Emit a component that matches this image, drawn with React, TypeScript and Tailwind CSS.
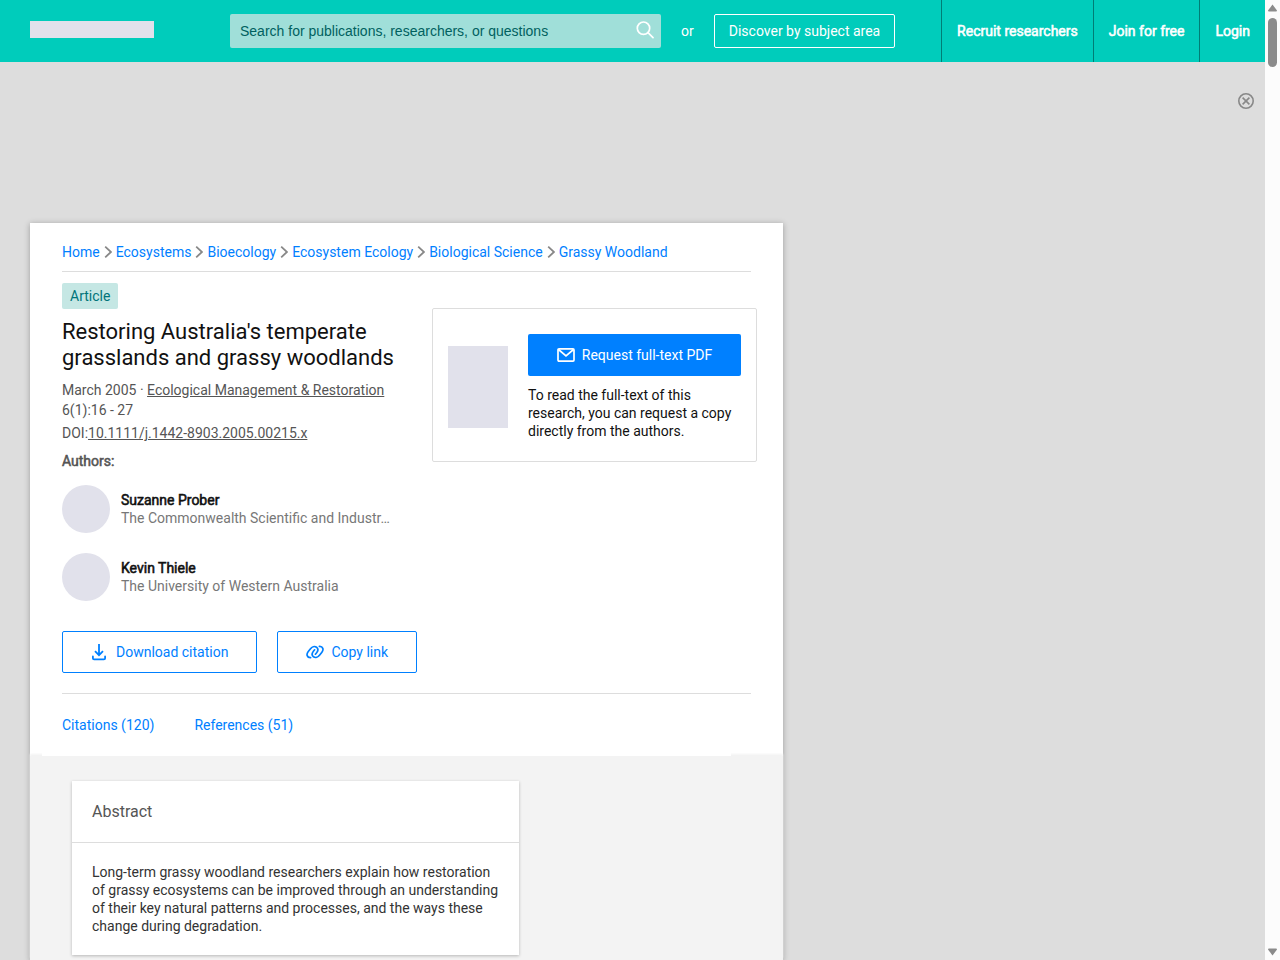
import React from "react";

const crumbs = [
  "Home",
  "Ecosystems",
  "Bioecology",
  "Ecosystem Ecology",
  "Biological Science",
  "Grassy Woodland",
];

const authors = [
  { name: "Suzanne Prober", institution: "The Commonwealth Scientific and Industr…" },
  { name: "Kevin Thiele", institution: "The University of Western Australia" },
];

const navLinks = ["Recruit researchers", "Join for free", "Login"];

function SearchIcon() {
  return (
    <svg width="18" height="18" viewBox="0 0 18 18" fill="none" stroke="#fff" strokeWidth="1.7">
      <circle cx="7.5" cy="7.2" r="6.2" />
      <path d="M12 11.7L17 16.7" strokeLinecap="round" />
    </svg>
  );
}

function CloseIcon() {
  return (
    <svg width="16" height="16" viewBox="0 0 16 16" fill="none" stroke="#888" strokeWidth="1.6">
      <circle cx="8" cy="8" r="7.2" />
      <path d="M4.6 4.6l6.8 6.8M11.4 4.6l-6.8 6.8" />
    </svg>
  );
}

function ChevronIcon() {
  return (
    <svg width="8" height="12" viewBox="0 0 8 12" fill="none" stroke="#888" strokeWidth="1.8">
      <path d="M1.2 0.7L7 6L1.2 11.3" />
    </svg>
  );
}

function MailIcon() {
  return (
    <svg width="18" height="14" viewBox="0 0 18 14" fill="none" stroke="#fff" strokeWidth="1.7">
      <rect x="1" y="0.9" width="16" height="12.2" rx="1" />
      <path d="M1.5 1.5L9 8l7.5-6.5" />
    </svg>
  );
}

function DownloadIcon() {
  return (
    <svg width="18" height="18" viewBox="0 0 18 18" fill="none" stroke="currentColor" strokeWidth="1.8">
      <path d="M8 1v11M4 8.2L8 12.2l4-4" />
      <path d="M1.9 13.4v1.8q0 1.2 1.2 1.2h9.8q1.2 0 1.2-1.2v-1.8" strokeLinecap="round" />
    </svg>
  );
}

function LinkIcon() {
  return (
    <svg
      width="18"
      height="14"
      viewBox="0 0 18 14"
      fill="none"
      stroke="currentColor"
      strokeWidth="1.7"
      strokeLinecap="round"
    >
      <path d="M4.6 12.6C3 12.7 1.7 12 1.2 10.6C0.8 9.4 1.2 8 2.1 6.8L4.3 3.9C5.9 1.8 8.6 0.8 10.5 2.2C12.3 3.6 12 6 10.6 7.8L9.4 9.2" />
      <path d="M13.4 1.4C15 1.3 16.3 2 16.8 3.4C17.2 4.6 16.8 6 15.9 7.2L13.7 10.1C12.1 12.2 9.4 13.2 7.5 11.8C5.7 10.4 6 8 7.4 6.2L8.6 4.8" />
    </svg>
  );
}

function Header() {
  return (
    <header className="flex h-[62px] items-center bg-[#00ccbb] pl-[30px] text-white">
      <a href="#" aria-label="Homepage" className="mr-[76px] mb-1 h-[17px] w-[124px] bg-[#e1e1eb]" />
      <form className="flex h-[34px] w-[431px] items-center rounded-[2px] bg-[#a0dfd9] pr-[7px]">
        <input
          type="text"
          aria-label="Search"
          placeholder="Search for publications, researchers, or questions"
          className="h-full min-w-0 flex-1 px-[10px] font-['Liberation_Sans',sans-serif] outline-none placeholder:text-[#00615f]"
        />
        <button type="button" aria-label="Submit search" className="pb-[2px]">
          <SearchIcon />
        </button>
      </form>
      <span className="mx-5">or</span>
      <button className="h-[34px] whitespace-nowrap rounded-[2px] border border-white px-[14px]">
        Discover by subject area
      </button>
      <nav className="ml-auto flex h-full">
        {navLinks.map((label) => (
          <a
            key={label}
            href="#"
            className="flex items-center whitespace-nowrap border-l border-[#007d75] px-[15px] [-webkit-text-stroke:0.04em]"
          >
            {label}
          </a>
        ))}
      </nav>
    </header>
  );
}

function Breadcrumbs() {
  return (
    <nav aria-label="Breadcrumb" className="border-b border-[#ddd] pt-5 pb-[10px]">
      <ol className="flex flex-wrap items-center gap-1 leading-[18px] text-[#0080ff]">
        {crumbs.map((crumb, i) => (
          <li key={crumb} className="flex items-center gap-1">
            {i > 0 && <ChevronIcon />}
            <a href="#">{crumb}</a>
          </li>
        ))}
      </ol>
    </nav>
  );
}

function PublicationDetails() {
  return (
    <div className="min-w-0 flex-1 pr-[30px]">
      <span className="inline-block h-[26px] rounded-[2px] bg-[#c5e7e4] px-2 leading-[26px] text-[#00747a]">
        Article
      </span>
      <h1 className="mt-[10px] text-[22px] leading-[26px] text-[#111]">
        Restoring Australia's temperate grasslands and grassy woodlands
      </h1>
      <div className="mt-[9px] leading-5 text-[#555]">
        <p>
          March 2005 ·{" "}
          <a href="#" className="underline">
            Ecological Management & Restoration
          </a>{" "}
          6(1):16 - 27
        </p>
        <p className="mt-[3px]">
          DOI:
          <a href="#" className="underline">
            10.1111/j.1442-8903.2005.00215.x
          </a>
        </p>
        <h2 className="mt-2 [-webkit-text-stroke:0.04em]">Authors:</h2>
      </div>
      <ul className="mt-[14px] flex flex-col gap-5">
        {authors.map((author) => (
          <li key={author.name} className="flex items-center gap-[11px]">
            <span className="size-12 shrink-0 rounded-full bg-[#e1e1eb]" />
            <div className="leading-[18px]">
              <a href="#" className="text-[#111] [-webkit-text-stroke:0.04em]">
                {author.name}
              </a>
              <p className="whitespace-nowrap text-[#777]">{author.institution}</p>
            </div>
          </li>
        ))}
      </ul>
    </div>
  );
}

function RequestBox() {
  return (
    <aside className="mt-[25px] flex w-[325px] shrink-0 items-center gap-5 rounded-[2px] border border-[#ddd] px-[15px] pt-[25px] pb-[21px]">
      <div className="h-[82px] w-[60px] shrink-0 bg-[#e1e1eb]" />
      <div>
        <button className="flex h-[42px] w-full items-center justify-center gap-[7px] rounded-[2px] bg-[#0080ff] text-white">
          <MailIcon />
          Request full-text PDF
        </button>
        <p className="mt-[10px] leading-[18px] text-[#111]">
          To read the full-text of this research, you can request a copy directly from the authors.
        </p>
      </div>
    </aside>
  );
}

function OutlineButton({ children }: { children: React.ReactNode }) {
  return (
    <button className="flex h-[42px] items-center gap-[7px] rounded-[2px] border border-[#0080ff] px-7 text-[#0080ff]">
      {children}
    </button>
  );
}

function Abstract() {
  return (
    <section className="ml-[42px] max-w-[447px] bg-white shadow-[0_1px_3px_rgba(0,0,0,0.25)]">
      <h2 className="border-b border-[#ddd] px-5 py-5 text-base leading-[21px] text-[#555]">
        Abstract
      </h2>
      <p className="py-5 pr-4 pl-5 leading-[18px] text-[#333]">
        Long-term grassy woodland researchers explain how restoration of grassy ecosystems can be
        improved through an understanding of their key natural patterns and processes, and the ways
        these change during degradation.
      </p>
    </section>
  );
}

function ScrollBar() {
  return (
    <div className="flex w-[15px] shrink-0 flex-col items-center bg-[#fcfcfc] py-1">
      <svg width="9" height="8" viewBox="0 0 9 8" fill="#8b8b8b">
        <path d="M4.5 0.5L9 6.5Q9 7.5 8 7.5H1Q0 7.5 0 6.5Z" />
      </svg>
      <div className="mt-[6px] h-[49px] w-[9px] rounded-full bg-[#8b8b8b]" />
      <svg className="mt-auto" width="9" height="8" viewBox="0 0 9 8" fill="#8b8b8b">
        <path d="M4.5 7.5L9 1.5Q9 0.5 8 0.5H1Q0 0.5 0 1.5Z" />
      </svg>
    </div>
  );
}

export default function App() {
  return (
    <div className="flex min-h-screen bg-[#ddd] font-[Roboto,sans-serif] text-sm">
      <div className="flex min-w-0 flex-1 flex-col">
        <Header />
        <div className="flex h-[161px] justify-end pt-[31px] pr-[11px]">
          <button aria-label="Close" className="self-start">
            <CloseIcon />
          </button>
        </div>
        <main className="mx-[30px] flex max-w-[753px] flex-1 flex-col bg-white shadow-[0_1px_6px_rgba(0,0,0,0.3)]">
          <div className="px-8">
            <Breadcrumbs />
            <div className="-mr-[6px] flex items-start pt-[11px]">
              <PublicationDetails />
              <RequestBox />
            </div>
            <div className="mt-[30px] flex gap-5 border-b border-[#ddd] pb-5">
              <OutlineButton>
                <DownloadIcon />
                Download citation
              </OutlineButton>
              <OutlineButton>
                <LinkIcon />
                Copy link
              </OutlineButton>
            </div>
          </div>
          {/* sits over the soft top edge of the grey area below */}
          <nav className="relative z-10 mr-[52px] ml-3 flex h-[62px] items-center gap-10 bg-white pl-5 text-[#0080ff]">
            <a href="#">Citations (120)</a>
            <a href="#">References (51)</a>
          </nav>
          <div className="flex-1 bg-[#f3f3f3] pt-[25px] shadow-[0_-2px_2px_#f3f3f3]">
            <Abstract />
          </div>
        </main>
      </div>
      <ScrollBar />
    </div>
  );
}
